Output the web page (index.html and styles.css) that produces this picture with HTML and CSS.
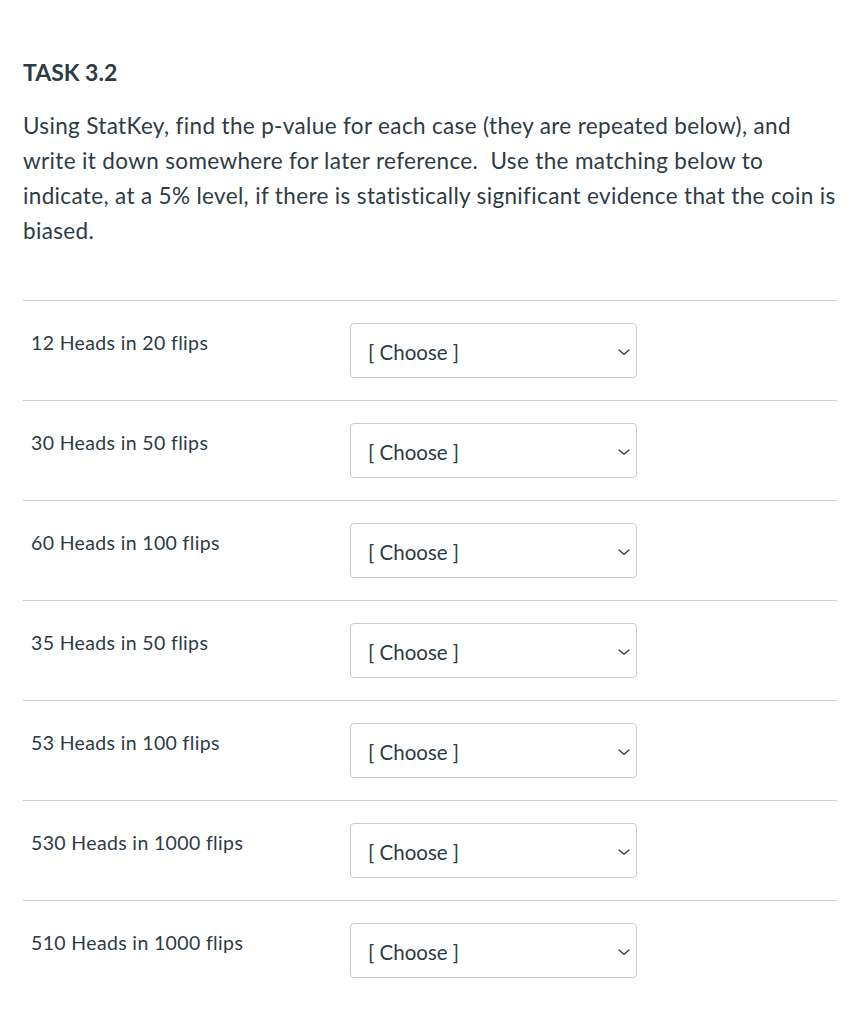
FILE: index.html
```html
<!DOCTYPE html>
<html>
<head>
<meta charset="utf-8">
<link rel="stylesheet" href="styles.css">
</head>
<body>
<div class="page">
  <h3 class="title">TASK 3.2</h3>
  <p class="intro">Using StatKey, find the p-value for each case (they are repeated below), and write it down somewhere for later reference.&nbsp; Use the matching below to indicate, at a 5% level, if there is statistically significant evidence that the coin is biased.</p>
  <div class="rows">
    <div class="row"><div class="label">12 Heads in 20 flips</div><div class="select"><span>[ Choose ]</span><svg class="chev" viewBox="0 0 12 6" width="12" height="6"><path d="M0.7 0.7 L6 5.3 L11.3 0.7" fill="none" stroke="#2D3B45" stroke-width="1.3"/></svg></div></div>
    <div class="row"><div class="label">30 Heads in 50 flips</div><div class="select"><span>[ Choose ]</span><svg class="chev" viewBox="0 0 12 6" width="12" height="6"><path d="M0.7 0.7 L6 5.3 L11.3 0.7" fill="none" stroke="#2D3B45" stroke-width="1.3"/></svg></div></div>
    <div class="row"><div class="label">60 Heads in 100 flips</div><div class="select"><span>[ Choose ]</span><svg class="chev" viewBox="0 0 12 6" width="12" height="6"><path d="M0.7 0.7 L6 5.3 L11.3 0.7" fill="none" stroke="#2D3B45" stroke-width="1.3"/></svg></div></div>
    <div class="row"><div class="label">35 Heads in 50 flips</div><div class="select"><span>[ Choose ]</span><svg class="chev" viewBox="0 0 12 6" width="12" height="6"><path d="M0.7 0.7 L6 5.3 L11.3 0.7" fill="none" stroke="#2D3B45" stroke-width="1.3"/></svg></div></div>
    <div class="row"><div class="label">53 Heads in 100 flips</div><div class="select"><span>[ Choose ]</span><svg class="chev" viewBox="0 0 12 6" width="12" height="6"><path d="M0.7 0.7 L6 5.3 L11.3 0.7" fill="none" stroke="#2D3B45" stroke-width="1.3"/></svg></div></div>
    <div class="row"><div class="label">530 Heads in 1000 flips</div><div class="select"><span>[ Choose ]</span><svg class="chev" viewBox="0 0 12 6" width="12" height="6"><path d="M0.7 0.7 L6 5.3 L11.3 0.7" fill="none" stroke="#2D3B45" stroke-width="1.3"/></svg></div></div>
    <div class="row"><div class="label">510 Heads in 1000 flips</div><div class="select"><span>[ Choose ]</span><svg class="chev" viewBox="0 0 12 6" width="12" height="6"><path d="M0.7 0.7 L6 5.3 L11.3 0.7" fill="none" stroke="#2D3B45" stroke-width="1.3"/></svg></div></div>
  </div>
</div>
</body>
</html>
```
FILE: styles.css
```css
html, body {
  margin: 0;
  padding: 0;
  background: #ffffff;
}
body {
  font-family: Lato, "Noto Sans", sans-serif;
  color: #2D3B45;
}
.page {
  padding: 58px 23px 0 23px;
}
.title {
  margin: 0;
  font-size: 23px;
  line-height: 29px;
  font-weight: 700;
}
.intro {
  margin: 21px -4px 0 0;
  font-size: 22.5px;
  line-height: 35px;
  letter-spacing: 0.35px;
}
.rows {
  margin-top: 52px;
}
.row {
  border-top: 1px solid #C7CDD1;
  display: flex;
  align-items: flex-start;
  padding: 22px 0 22px 8px;
}
.label {
  width: 319px;
  font-size: 19.5px;
  line-height: 27px;
  letter-spacing: 0.35px;
  margin-top: 6px;
}
.select {
  box-sizing: border-box;
  width: 287px;
  height: 55px;
  border: 1px solid #C7CDD1;
  border-radius: 4px;
  display: flex;
  align-items: center;
  justify-content: space-between;
  padding: 2px 6px 0 17px;
  font-size: 20.5px;
}
.chev {
  display: block;
}
```
